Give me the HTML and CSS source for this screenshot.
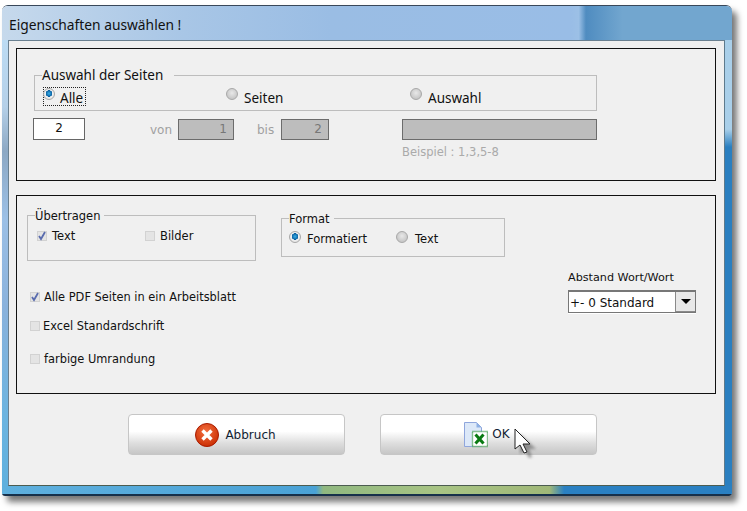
FILE: index.html
```html
<!DOCTYPE html>
<html lang="de">
<head>
<meta charset="utf-8">
<title>Eigenschaften auswählen !</title>
<link rel="stylesheet" href="styles.css">
</head>
<body>
<div class="window">
  <div class="titlebar">Eigenschaften auswählen !</div>
  <div class="frame-row">
    <div class="side side-left"></div>
    <div class="client">
      <section class="panel panel-pages">
        <div class="group group-pages">
          <div class="legend legend-pages">Auswahl der Seiten</div>
          <div class="radio-row">
            <label class="opt opt-alle"><span class="radio on"></span><span class="focus">Alle</span></label>
            <label class="opt opt-seiten"><span class="radio"></span><span class="big-label">Seiten</span></label>
            <label class="opt opt-auswahl"><span class="radio"></span><span class="big-label">Auswahl</span></label>
          </div>
        </div>
        <div class="fields">
          <div class="field field-copies">2</div>
          <span class="muted muted-von">von</span>
          <div class="field off field-von">1</div>
          <span class="muted muted-bis">bis</span>
          <div class="field off field-bis">2</div>
          <div class="field off field-sel"></div>
        </div>
        <div class="hint">Beispiel : 1,3,5-8</div>
      </section>

      <section class="panel panel-options">
        <div class="groups">
          <div class="group group-transfer">
            <div class="legend">Übertragen</div>
            <div class="check-row">
              <label class="opt opt-text"><span class="check on"><svg viewBox="0 0 10 10" class="tick"><path d="M2 5l2 3 4-7" /></svg></span>Text</label>
              <label class="opt opt-bilder"><span class="check"></span>Bilder</label>
            </div>
          </div>
          <div class="group group-format">
            <div class="legend">Format</div>
            <div class="check-row">
              <label class="opt opt-format"><span class="radio on"></span>Formatiert</label>
              <label class="opt opt-ftext"><span class="radio"></span>Text</label>
            </div>
          </div>
        </div>
        <div class="lower">
          <div class="checks">
            <label class="opt line line-1"><span class="check on"><svg viewBox="0 0 10 10" class="tick"><path d="M2 5l2 3 4-7" /></svg></span>Alle PDF Seiten in ein Arbeitsblatt</label>
            <label class="opt line line-2"><span class="check"></span>Excel Standardschrift</label>
            <label class="opt line line-3"><span class="check"></span>farbige Umrandung</label>
          </div>
          <div class="spacing">
            <div class="spacing-label">Abstand Wort/Wort</div>
            <div class="select">
              <span class="select-value">+- 0 Standard</span>
              <span class="select-btn"><span class="arrow"></span></span>
            </div>
          </div>
        </div>
      </section>

      <div class="buttons">
        <div class="btn btn-cancel">
          <svg class="icon" viewBox="0 0 24 24" width="24" height="24">
            <defs><radialGradient id="red" cx="45%" cy="35%" r="70%"><stop offset="0" stop-color="#f4703f"/><stop offset="1" stop-color="#c82a00"/></radialGradient></defs>
            <circle cx="12" cy="12" r="11.5" fill="url(#red)" stroke="#a81c00"/>
            <path d="M7.5 7.5l9 9M16.500 7.500l-9 9" stroke="#fff" stroke-width="3.400" fill="none"/>
          </svg>
          <span>Abbruch</span>
        </div>
        <div class="btn btn-ok">
          <svg class="icon" viewBox="0 0 24 26" width="24" height="26">
            <path d="M.5.5h12l5 5v19H.5z" fill="#dce8f8" stroke="#8fa6dc"/>
            <path d="M12.500.5v5h5z" fill="#8db0e4"/>
            <rect x="8.500" y="9.500" width="15" height="15" fill="#fff" stroke="#1f8a2c" stroke-dasharray="1 1" stroke-width="1.400"/>
            <path d="M11.500 12.500l8 9M19.500 12.500l-8 9" stroke="#0a7a12" stroke-width="3" fill="none"/>
          </svg>
          <span>OK</span>
        </div>
      </div>
    </div>
    <div class="side side-right"></div>
  </div>
  <div class="bottom-frame"></div>
</div>
<svg class="cursor" viewBox="0 0 24 32" width="24" height="32">
  <path d="M3 3v20l5-4 4 8 3-1-3-8h7z" fill="#555" opacity=".55" transform="translate(3 3)" filter="url(#blur)"/>
  <defs><filter id="blur"><feGaussianBlur stdDeviation="1.500"/></filter></defs>
  <path d="M1 1v20l5-4 4 8 3-1-4-8h7z" fill="#fff" stroke="#222" stroke-width="1"/>
</svg>
</body>
</html>
```
FILE: styles.css
```css
* { box-sizing: border-box; }
html, body { margin: 0; padding: 0; background: #fff; }
body {
  width: 747px;
  height: 511px;
  overflow: hidden;
  position: relative;
  padding: 5px 0 0 2px;
  font-family: "DejaVu Sans", sans-serif;
  font-size: 11.500px;
  color: #111;
}
.window {
  width: 730px;
  height: 491px;
  border-radius: 6px 6px 3px 3px;
  box-shadow: 5px 6px 6px #777;
  border-top: 1px solid #39485a;
  overflow: hidden;
  display: flex;
  flex-direction: column;
}
.titlebar {
  height: 34px;
  flex: none;
  padding: 10px 0 0 7px;
  font-family: "Noto Sans", sans-serif;
  font-size: 13.800px;
  line-height: 18px;
  color: #111;
  background: linear-gradient(90deg, #c6d9ec 0, #a8c6e6 25%, #9abde4 45%, #99bde6 78%, #9cc0e6 79%, #4f8cc0 80%, #72a6cf 85%, #72a6cf 100%);
}
.frame-row { display: flex; flex: 1; min-height: 0; }
.side { flex: none; }
.side-left { width: 6px; background: linear-gradient(180deg, #bcdcf4 0, #b5d0e8 15%, #8ca8c4 25%, #9cc0e6 40%, #8ab2dc 60%, #6cb4e0 85%, #5fb0de 100%); }
.side-right { width: 7px; background: linear-gradient(180deg, #a9cfe9 0, #a9cfe9 20%, #2a7fc0 24%, #2a7fc0 100%); }
.client {
  flex: 1;
  background: #f0f0f0;
  border: 1px solid #5d6a76;
  border-color: #6a8090 #5d7a8c #4c5c50 #6a8090;
  padding: 7px 8px 0 7px;
  min-width: 0;
}
.bottom-frame {
  height: 10px;
  flex: none;
  background: linear-gradient(90deg, #5fb0de 0, #4aa2d6 43%, #90b880 44%, #a8c484 60%, #a0b878 75%, #2a80c2 77%, #2a80c2 100%);
  border-bottom: 2px solid #16304a;
}
.panel { border: 1px solid #111; background: #f0f0f0; }
.panel-pages { height: 133px; padding: 26px 0 0 17px; }
.panel-options { height: 199px; margin-top: 14px; padding: 19px 0 0 10px; }
.group { border: 1px solid #bdbdbd; position: relative; }
.legend {
  position: absolute;
  top: -7px;
  left: 7px;
  padding: 0 4px 0 0;
  background: #f0f0f0;
  font-size: 11.500px;
  line-height: 14px;
}
.legend-pages {
  font-family: "Noto Sans", sans-serif;
  font-size: 13.500px;
  line-height: 16px;
  padding-right: 11px;
  top: -9px;
}
.group-pages { width: 563px; height: 36px; }
.radio-row { display: flex; align-items: flex-start; padding: 11px 0 0 8px; }
.opt { display: inline-flex; align-items: center; white-space: nowrap; }
.opt-alle { width: 183px; }
.opt-seiten { width: 184px; }
.big-label { font-family: "Noto Sans", sans-serif; font-size: 13.500px; line-height: 16px; margin: 3px 0 0 6px; }
.focus {
  font-family: "Noto Sans", sans-serif;
  font-size: 13.500px;
  line-height: 16px;
  border: 1px dotted #222;
  padding: 2px 0 0 16px;
  margin-left: -12px;
  width: 43px;
  height: 19px;
}
.radio {
  width: 12px;
  height: 12px;
  flex: none;
  border-radius: 50%;
  border: 1px solid #a8a8a8;
  background: radial-gradient(circle at 50% 40%, #e8e8e8 0, #c8c8c8 70%);
  position: relative;
  z-index: 1;
  margin-bottom: 6px;
}
.radio.on {
  background: radial-gradient(circle at 50% 45%, #38b0e8 0, #0a5fa0 42%, #f2f2f2 46%, #d8d8d8 100%);
}
.fields { display: flex; align-items: flex-start; margin-top: 7px; margin-left: -1px; }
.field {
  height: 22px;
  border: 1px solid #666;
  background: #fff;
  font-size: 12px;
  line-height: 19px;
  text-align: center;
  flex: none;
}
.field.off { background: #bdbdbd; color: #777; text-align: right; padding-right: 6px; margin-top: 1px; height: 21px; border-color: #6c6c6c; }
.field-copies { width: 52px; color: #111; }
.muted { color: #a0a0a0; font-size: 12px; line-height: 22px; margin-top: 1px; flex: none; }
.muted-von { margin-left: 65px; width: 28px; }
.field-von { width: 56px; }
.muted-bis { margin-left: 23px; width: 24px; }
.field-bis { width: 48px; }
.field-sel { width: 195px; margin-left: 73px; }
.hint { color: #aaa; margin: 4px 0 0 368px; font-size: 11.500px; line-height: 14px; }
.groups { display: flex; align-items: flex-start; }
.group-transfer { width: 229px; height: 46px; }
.group-format { width: 224px; height: 39px; margin: 3px 0 0 25px; }
.check-row { display: flex; padding-top: 13px; line-height: 14px; font-size: 11.500px; }
.group-transfer .check-row { padding-left: 9px; }
.group-format .check-row { padding: 12px 0 0 7px; }
.opt-text { width: 108px; }
.opt-text .check { margin-right: 5px; }
.opt-bilder .check { margin-right: 5px; }
.opt-format { width: 107px; }
.opt-format .radio, .opt-ftext .radio { margin: 0 6px 3px 0; }
.opt-ftext .radio { margin-right: 7px; }
.check {
  width: 10px;
  height: 10px;
  flex: none;
  border: 1px solid #d2d2d2;
  background: #e4e4e4;
  margin-right: 4px;
  position: relative;
}
.tick { position: absolute; left: -1px; top: -1px; width: 10px; height: 10px; }
.tick path { fill: none; stroke: #5a6cae; stroke-width: 1.800; }
.lower { display: flex; justify-content: space-between; }
.checks { display: flex; flex-direction: column; margin: 29px 0 0 3px; line-height: 14px; }
.line { font-size: 11.400px; }
.line-2 { margin-top: 15px; }
.line-2 .check { margin-right: 3px; }
.line-3 { margin-top: 19px; }
.spacing { margin: 10px 19px 0 0; width: 128px; }
.spacing-label { font-size: 11.200px; line-height: 14px; white-space: nowrap; margin-bottom: 5px; }
.select {
  display: flex;
  width: 128px;
  height: 23px;
  border: 1px solid #777;
  border-width: 2px 1px 1px 1px;
  background: #fff;
  box-shadow: 0 1px 0 #fff;
  align-items: center;
}
.select-value { flex: 1; padding: 2px 0 0 1px; font-size: 12px; }
.select-btn {
  width: 20px;
  height: 20px;
  background: #e8e8e8;
  border: 1px solid #8a8a8a;
  border-width: 0 0 1px 1px;
  display: flex;
  align-items: center;
  justify-content: center;
}
.arrow { border: 5px solid transparent; border-top: 5px solid #000; border-bottom: 0; }
.buttons { display: flex; gap: 35px; margin: 20px 0 0 112px; }
.btn {
  width: 217px;
  height: 41px;
  border: 1px solid #c6c6c6;
  border-radius: 4px;
  background: linear-gradient(180deg, #fff 0, #fff 42%, #dedede 72%, #c6c6c6 100%);
  display: flex;
  align-items: center;
  justify-content: center;
  gap: 6px;
  font-size: 12px;
  color: #123;
}
.btn-cancel { padding-right: 2px; }
.btn-ok { gap: 4px; padding-right: 3px; }
.btn-ok span { margin-top: -2px; }
.icon { flex: none; }
.cursor { position: absolute; left: 514px; top: 428px; }
```
